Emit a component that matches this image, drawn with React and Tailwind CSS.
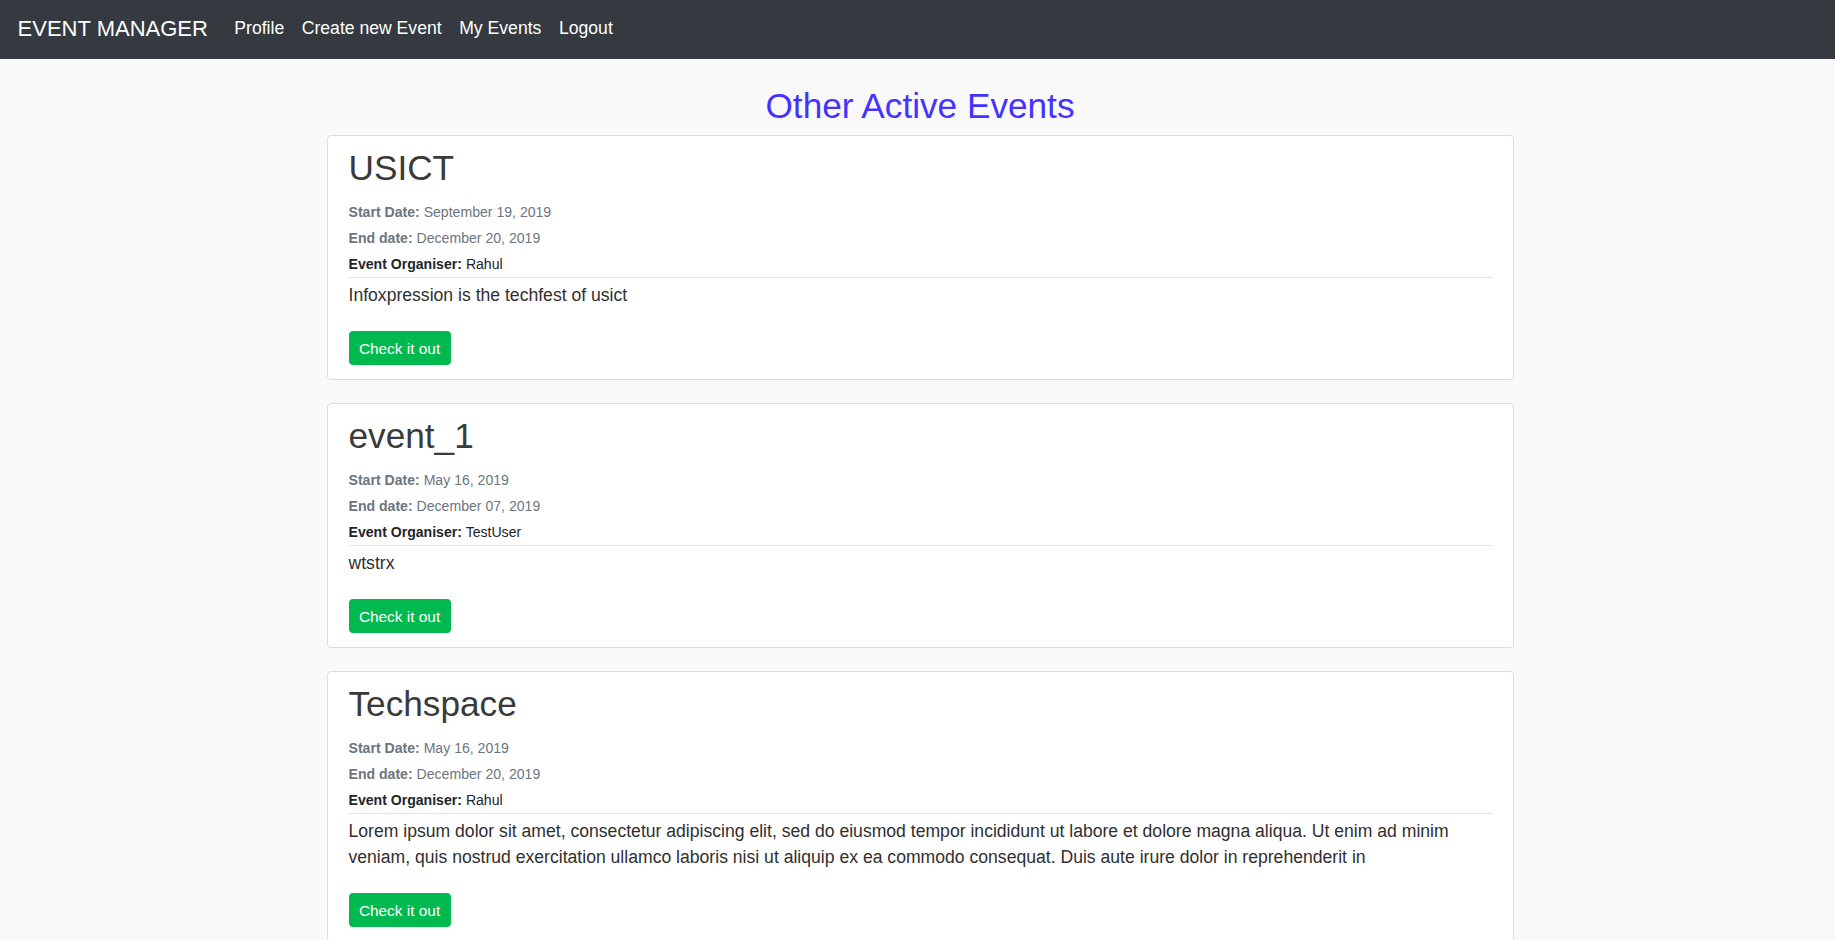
export default function App() {
  const events = [
    {
      title: "USICT",
      start: "September 19, 2019",
      end: "December 20, 2019",
      organiser: "Rahul",
      desc: "Infoxpression is the techfest of usict",
    },
    {
      title: "event_1",
      start: "May 16, 2019",
      end: "December 07, 2019",
      organiser: "TestUser",
      desc: "wtstrx",
    },
    {
      title: "Techspace",
      start: "May 16, 2019",
      end: "December 20, 2019",
      organiser: "Rahul",
      desc: "Lorem ipsum dolor sit amet, consectetur adipiscing elit, sed do eiusmod tempor incididunt ut labore et dolore magna aliqua. Ut enim ad minim veniam, quis nostrud exercitation ullamco laboris nisi ut aliquip ex ea commodo consequat. Duis aute irure dolor in reprehenderit in",
    },
  ];

  return (
    <div className="min-h-screen bg-[#f9f9f9] font-['Liberation_Sans',Arial,sans-serif]">
      <nav className="h-[59px] bg-[#343a40] flex items-center px-[17.6px] pb-[3px]">
        <a className="text-[22px] text-white mr-[17.6px] leading-[33px]">EVENT MANAGER</a>
        <div className="flex items-center">
          {["Profile", "Create new Event", "My Events", "Logout"].map((l) => (
            <a key={l} className="text-[17.6px] leading-[26.4px] text-white px-[8.8px]">
              {l}
            </a>
          ))}
        </div>
      </nav>

      <div className="pl-[5px]">
        <h1 className="text-center text-[35.2px] leading-[1.2] text-[#4433ff] mt-[26px] mb-[8px]">
          Other Active Events
        </h1>

        {events.map((e) => (
          <div
            key={e.title}
            className="w-[1187px] mx-auto bg-white border border-[#dcdcdc] rounded-[4px] px-[21px] pt-[10px] pb-[14px] mb-[23px]"
          >
            <h2 className="text-[35.2px] leading-[43px] text-[#3a3a3a]">{e.title}</h2>
            <div className="mt-[10px] text-[14.08px] leading-[26px]">
              <div className="text-[#6c757d]">
                <span className="font-bold">Start Date:</span> {e.start}
              </div>
              <div className="text-[#6c757d]">
                <span className="font-bold">End date:</span> {e.end}
              </div>
              <div className="text-[#212529]">
                <span className="font-bold">Event Organiser:</span> {e.organiser}
              </div>
            </div>
            <div className="border-t border-[#e3e3e3]" />
            <p className="mt-[4px] mb-[22.6px] text-[17.6px] leading-[26.4px] text-[#2f2f2f]">{e.desc}</p>
            <div className="flex">
              <button className="bg-[#00b94f] border border-[#00b94f] text-white text-[15.4px] leading-[23.1px] px-[9.4px] py-[4.4px] rounded-[3.5px]">
                Check it out
              </button>
            </div>
          </div>
        ))}
      </div>
    </div>
  );
}
